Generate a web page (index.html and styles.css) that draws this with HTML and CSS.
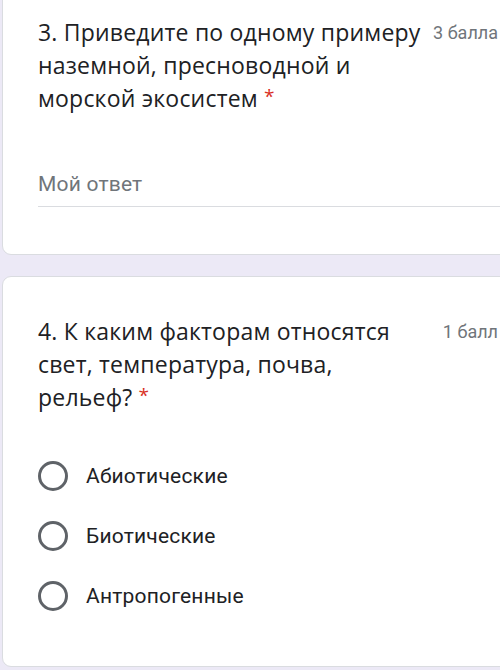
FILE: index.html
```html
<!DOCTYPE html>
<html lang="ru">
<head>
<meta charset="utf-8">
<link rel="stylesheet" href="styles.css">
</head>
<body>
<div class="page">
  <section class="card card-first">
    <div class="q-head">
      <div class="q-title">3. Приведите по одному примеру наземной, пресноводной и морской экосистем <span class="req">*</span></div>
      <div class="q-points">3 балла</div>
    </div>
    <div class="answer">Мой ответ</div>
  </section>
  <section class="card card-second">
    <div class="q-head">
      <div class="q-title">4. К каким факторам относятся свет, температура, почва, рельеф? <span class="req">*</span></div>
      <div class="q-points">1 балл</div>
    </div>
    <div class="options">
      <label class="option"><span class="radio"></span><span class="opt-text">Абиотические</span></label>
      <label class="option"><span class="radio"></span><span class="opt-text">Биотические</span></label>
      <label class="option"><span class="radio"></span><span class="opt-text">Антропогенные</span></label>
    </div>
  </section>
</div>
</body>
</html>
```

FILE: styles.css
```css
html, body {
  margin: 0;
  padding: 0;
}
body {
  background: #ece9f6;
  width: 500px;
  height: 670px;
  overflow: hidden;
}
.page {
  display: flex;
  flex-direction: column;
  gap: 21px;
}
.card {
  background: #ffffff;
  border: 1px solid #dadce0;
  border-radius: 9px;
  margin-left: 2px;
  margin-right: -40px;
  padding: 34px 41px 0 35px;
}
.card-first {
  margin-top: -19px;
  padding-bottom: 47px;
}
.card-second {
  padding-top: 38px;
  padding-bottom: 40px;
}
.q-head {
  display: flex;
  align-items: flex-start;
}
.q-title {
  flex: 0 0 392px;
  font-family: "Open Sans", sans-serif;
  font-size: 23px;
  letter-spacing: 0.2px;
  line-height: 33px;
  color: #202124;
}
.req {
  color: #d93025;
  font-size: 19px;
  vertical-align: top;
  line-height: 28px;
}
.q-points {
  margin-left: auto;
  flex-shrink: 0;
  font-family: Roboto, sans-serif;
  font-size: 18px;
  line-height: 33px;
  color: #70757a;
  white-space: nowrap;
}
.answer {
  margin-top: 54px;
  margin-right: -40px;
  font-family: Roboto, sans-serif;
  font-size: 21px;
  letter-spacing: 0.2px;
  line-height: 30px;
  color: #70757a;
  padding-bottom: 7px;
  border-bottom: 1px solid #dadce0;
}
.options {
  margin-top: 32px;
  display: flex;
  flex-direction: column;
}
.option {
  display: flex;
  align-items: center;
  height: 60px;
  gap: 18px;
}
.radio {
  width: 24px;
  height: 24px;
  border: 3px solid #5f6368;
  border-radius: 50%;
  flex-shrink: 0;
}
.opt-text {
  font-family: Roboto, sans-serif;
  font-size: 21px;
  letter-spacing: 0.2px;
  color: #202124;
}
```
